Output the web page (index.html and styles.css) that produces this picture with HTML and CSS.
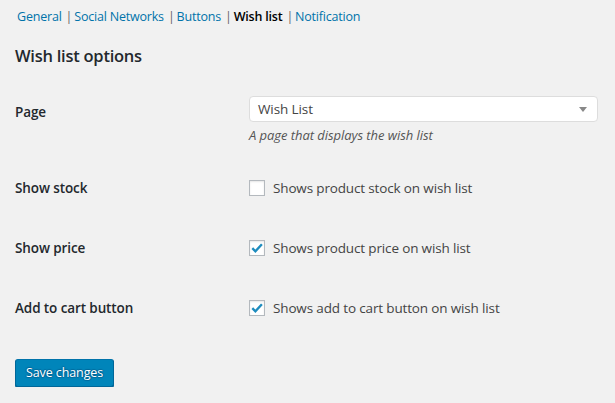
FILE: index.html
```html
<!DOCTYPE html>
<html lang="en">
<head>
<meta charset="utf-8">
<title>Wish list options</title>
<link rel="stylesheet" href="styles.css">
</head>
<body>
<div class="wrap">
  <ul class="subsubsub">
    <li><a href="#">General</a><span class="sep">|</span></li>
    <li><a href="#">Social Networks</a><span class="sep">|</span></li>
    <li><a href="#">Buttons</a><span class="sep">|</span></li>
    <li><a href="#" class="current">Wish list</a><span class="sep">|</span></li>
    <li><a href="#">Notification</a></li>
  </ul>
  <h2 class="title">Wish list options</h2>
  <div class="form">
    <div class="row row-page">
      <div class="th">Page</div>
      <div class="td">
        <div class="select"><span class="select-value">Wish List</span><span class="arrow"></span></div>
        <p class="description">A page that displays the wish list</p>
      </div>
    </div>
    <div class="row row-check">
      <div class="th">Show stock</div>
      <div class="td"><label class="check"><span class="box"></span>Shows product stock on wish list</label></div>
    </div>
    <div class="row row-check">
      <div class="th">Show price</div>
      <div class="td"><label class="check"><span class="box"><svg viewBox="0 0 16 16" width="16" height="16"><path d="M3.3 8.2 L6.4 11.3 L12.9 4.3" fill="none" stroke="#1e8cbe" stroke-width="2.4"/></svg></span>Shows product price on wish list</label></div>
    </div>
    <div class="row row-check">
      <div class="th">Add to cart button</div>
      <div class="td"><label class="check"><span class="box"><svg viewBox="0 0 16 16" width="16" height="16"><path d="M3.3 8.2 L6.4 11.3 L12.9 4.3" fill="none" stroke="#1e8cbe" stroke-width="2.4"/></svg></span>Shows add to cart button on wish list</label></div>
    </div>
  </div>
  <button class="button-primary" type="button">Save changes</button>
</div>
</body>
</html>
```
FILE: styles.css
```css
html, body {
  margin: 0;
  padding: 0;
  background: #f1f1f1;
}
body {
  font-family: "Open Sans", "Noto Sans", sans-serif;
  color: #444;
  font-size: 13px;
}
.wrap {
  padding: 8px 17px 0 15px;
}
.subsubsub {
  list-style: none;
  margin: 0;
  padding: 0 0 0 2px;
  display: flex;
  font-size: 12.5px;
  letter-spacing: -0.2px;
  line-height: 18px;
  color: #666;
}
.subsubsub a {
  color: #0073aa;
  text-decoration: none;
}
.subsubsub a.current {
  color: #000;
  font-weight: 600;
}
.sep {
  margin: 0 2px 0 4px;
  color: #666;
}
.title {
  margin: 18px 0 0;
  font-size: 16.5px;
  letter-spacing: -0.25px;
  line-height: 24px;
  font-weight: 600;
  color: #23282d;
}
.form {
  margin-top: 28px;
}
.row {
  display: grid;
  grid-template-columns: 234px 349px;
}
.th {
  font-size: 13.5px;
  letter-spacing: -0.1px;
  font-weight: 600;
  color: #23282d;
  line-height: 18px;
}
.row-page .th {
  padding-top: 7px;
}
.row-check {
  height: 60px;
  align-items: center;
}
.row-page {
  margin-bottom: 14px;
}
.select {
  height: 26px;
  box-sizing: border-box;
  border: 1px solid #ddd;
  border-radius: 4px;
  background: #fff;
  display: flex;
  align-items: center;
  justify-content: space-between;
  padding: 0 8px 0 8px;
  font-size: 13.5px;
  letter-spacing: -0.1px;
  color: #444;
}
.arrow {
  width: 0;
  height: 0;
  border-left: 4px solid transparent;
  border-right: 4px solid transparent;
  border-top: 5px solid #888;
  margin-right: 2px;
}
.description {
  margin: 4px 0 0;
  font-style: italic;
  font-size: 13px;
  letter-spacing: -0.05px;
  line-height: 18px;
  color: #555;
}
.check {
  display: flex;
  align-items: center;
  font-size: 13.5px;
  letter-spacing: -0.15px;
  line-height: 18px;
  color: #444;
}
.box {
  width: 16px;
  height: 16px;
  box-sizing: border-box;
  border: 1px solid #b4b9be;
  background: #fff;
  box-shadow: inset 0 1px 2px rgba(0,0,0,.1);
  margin-right: 8px;
  position: relative;
  flex: none;
}
.box svg {
  position: absolute;
  left: -1px;
  top: -1px;
}
.button-primary {
  margin-top: 21px;
  height: 28px;
  padding: 0 10px 1px;
  font-family: inherit;
  font-size: 12.5px;
  letter-spacing: -0.1px;
  color: #fff;
  background: #0085ba;
  border: 1px solid #0073aa;
  border-color: #0073aa #006799 #006799;
  border-radius: 3px;
  box-shadow: 0 1px 0 #006799;
  text-shadow: 0 -1px 1px #006799, 1px 0 1px #006799, 0 1px 1px #006799, -1px 0 1px #006799;
  cursor: pointer;
}
```
